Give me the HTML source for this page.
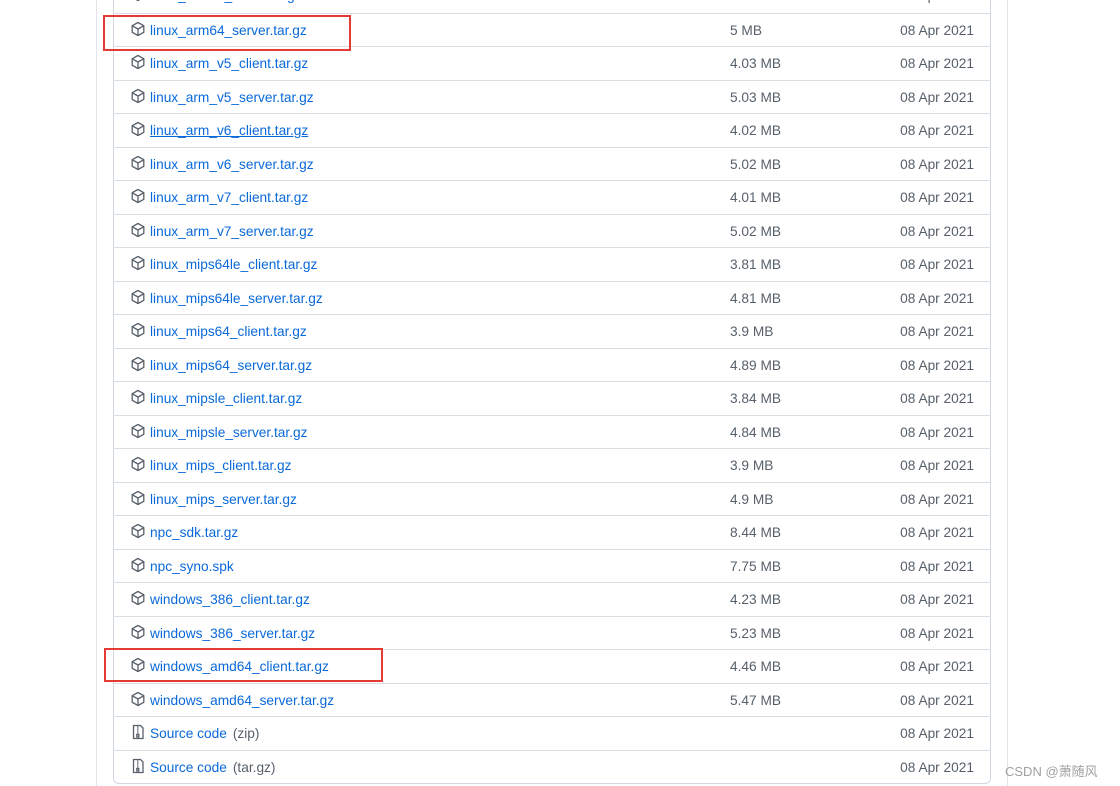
<!DOCTYPE html>
<html><head><meta charset="utf-8"><style>
body{margin:0;width:1120px;height:786px;background:#fff;position:relative;overflow:hidden;font-family:"Liberation Sans","Noto Sans CJK SC",sans-serif;}
.vl{position:absolute;top:0;bottom:0;width:1px;background:#e1e4e8}
.box{position:absolute;left:113px;width:876px;top:-22px;height:804px;border:1px solid #d0d7de;border-radius:6px;}
.row{position:absolute;left:0;right:0;height:33.5px;border-top:1px solid #d8dee4;font-size:13.7px;}
.row:first-child{border-top:none}
.ic{position:absolute;left:16px;top:7px}
.n{position:absolute;left:36px;top:9px;color:#0969da}
.s{position:absolute;left:616px;top:9px;color:#57606a}
.d{position:absolute;right:16px;top:9px;color:#57606a}
.g{color:#57606a;margin-left:6px}
.red{position:absolute;border:2px solid #e53935}
.wm{position:absolute;left:1005px;top:761px;font-size:13px;color:#a0a0a0}
</style></head><body>
<div class="vl" style="left:96px"></div>
<div class="vl" style="left:1007px"></div>
<div class="box" id="b"></div>
<div class="red" style="left:103px;top:15px;width:244px;height:32px"></div>
<div class="red" style="left:104px;top:648px;width:275px;height:30px"></div>
<div class="wm">CSDN @萧随风</div>
<script>
var rows=[["linux_arm64_client.tar.gz","3.98 MB"],["linux_arm64_server.tar.gz","5 MB"],["linux_arm_v5_client.tar.gz","4.03 MB"],["linux_arm_v5_server.tar.gz","5.03 MB"],["linux_arm_v6_client.tar.gz","4.02 MB",0,1],["linux_arm_v6_server.tar.gz","5.02 MB"],["linux_arm_v7_client.tar.gz","4.01 MB"],["linux_arm_v7_server.tar.gz","5.02 MB"],["linux_mips64le_client.tar.gz","3.81 MB"],["linux_mips64le_server.tar.gz","4.81 MB"],["linux_mips64_client.tar.gz","3.9 MB"],["linux_mips64_server.tar.gz","4.89 MB"],["linux_mipsle_client.tar.gz","3.84 MB"],["linux_mipsle_server.tar.gz","4.84 MB"],["linux_mips_client.tar.gz","3.9 MB"],["linux_mips_server.tar.gz","4.9 MB"],["npc_sdk.tar.gz","8.44 MB"],["npc_syno.spk","7.75 MB"],["windows_386_client.tar.gz","4.23 MB"],["windows_386_server.tar.gz","5.23 MB"],["windows_amd64_client.tar.gz","4.46 MB"],["windows_amd64_server.tar.gz","5.47 MB"],["Source code","","zip"],["Source code","","tar.gz"]];
var cube='<svg class="ic" width="16" height="16" viewBox="0 0 16 16" fill="none" stroke="#57606a" stroke-width="1.3" stroke-linejoin="round"><path d="M8 1.5l5.8 3.2v6.6L8 14.5l-5.8-3.2V4.7z"/><path d="M2.3 4.8L8 8l5.7-3.2M8 8v6.4"/></svg>';
var zip='<svg class="ic" width="16" height="16" viewBox="0 0 16 16" fill="none" stroke="#57606a" stroke-width="1.3"><path d="M3.5 1.5h7l2.5 2.5v10.5h-9.5z"/><path d="M7 3h1.5M7 5h1.5M7 7h1.5M7 9h1.5" /><rect x="6.8" y="10.5" width="2" height="2.5"/></svg>';
var h='';
rows.forEach(function(r,i){
var src=typeof r[2]=="string";
h+='<div class="row" style="top:'+(i*33.5)+'px">'+(src?zip:cube)+'<span class="n"'+(r[3]?' style="text-decoration:underline"':'')+'>'+r[0]+(src?'<span class="g">('+r[2]+')</span>':'')+'</span><span class="s">'+r[1]+'</span><span class="d">08 Apr 2021</span></div>';
});
document.getElementById('b').innerHTML=h;
</script>
</body></html>
